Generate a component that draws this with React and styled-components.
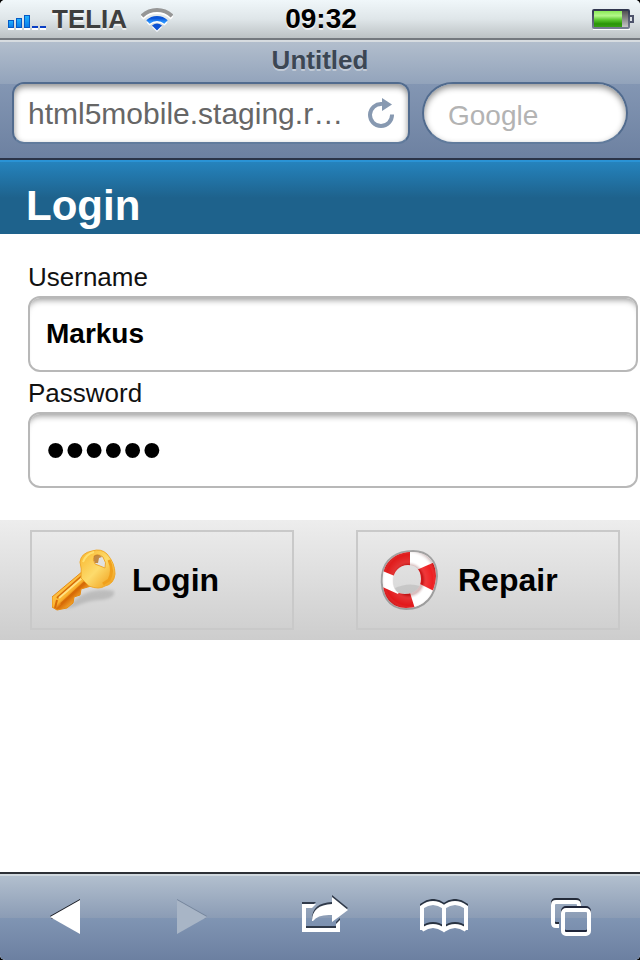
import React, { useState } from "react";
import styled, { createGlobalStyle } from "styled-components";

const GlobalStyle = createGlobalStyle`
  * {
    box-sizing: border-box;
  }

  body {
    margin: 0;
    background: #000;
    font-family: "Liberation Sans", Arial, Helvetica, sans-serif;
  }
`;

const Screen = styled.div`
  display: flex;
  flex-direction: column;
  min-height: 100vh;
  background: #fff;
  border-radius: 5px;
  overflow: hidden;
`;

const StatusBar = styled.div`
  display: grid;
  grid-template-columns: 1fr auto 1fr;
  align-items: center;
  height: 40px;
  padding: 0 6px 0 8px;
  border-bottom: 2px solid #74797e;
  background: linear-gradient(#f0f7fa, #dfe6e9 50%, #bcc2c4);
  font-weight: bold;
  line-height: 38px;
  text-shadow: 0 2px 0 rgba(255, 255, 255, 0.7);
`;

const Carrier = styled.div`
  display: flex;
  align-items: center;
  color: #3e3e3e;
  font-size: 26px;

  svg:first-child {
    margin: 6px 6px 0 0;
  }

  svg:last-child {
    margin-left: 14px;
  }
`;

const Clock = styled.time`
  color: #000;
  font-size: 28px;
`;

const Battery = styled.svg`
  justify-self: end;
`;

const BrowserBar = styled.header`
  height: 120px;
  padding: 4px 12px 0;
  border-top: 2px solid #d7dce0;
  border-bottom: 2px solid #2b3448;
  background: linear-gradient(
    #b2becd 0,
    #92a3bb 42px,
    #8396b3 42px,
    #6d81a1 100%
  );
`;

const PageTitle = styled.div`
  color: #3c4754;
  font-size: 26px;
  font-weight: bold;
  line-height: 28px;
  text-align: center;
  text-shadow: 0 2px 0 rgba(255, 255, 255, 0.4);
`;

const BarFields = styled.div`
  display: grid;
  grid-template-columns: 398fr 206fr;
  gap: 12px;
  margin-top: 8px;
`;

const FieldBox = styled.div`
  display: flex;
  align-items: center;
  min-width: 0;
  height: 62px;
  padding: ${(props) => (props.$round ? "6px 24px 0" : "2px 12px 0 14px")};
  border: 2px solid #516b8e;
  border-bottom-color: #617b9c;
  border-radius: ${(props) => (props.$round ? "31px" : "12px")};
  background: #fff;
  box-shadow: inset 0 3px 6px rgba(0, 0, 0, 0.45);
`;

const BarInput = styled.input`
  flex: 1;
  width: 100%;
  min-width: 0;
  padding: 0;
  border: 0;
  outline: 0;
  background: transparent;
  color: #666;
  font-family: inherit;
  font-size: ${(props) => props.$size};
  text-overflow: ellipsis;

  &::placeholder {
    color: #b3b3b3;
    opacity: 1;
  }
`;

const IconButton = styled.button`
  display: flex;
  align-items: center;
  justify-content: center;
  padding: 0;
  border: 0;
  background: none;
  cursor: pointer;
`;

const Page = styled.main`
  flex: 1;
`;

const PageHeader = styled.div`
  padding: 22px 26px 0;
  height: 74px;
  border-top: 2px solid #2a93d5;
  background: linear-gradient(#2583bd, #1e628c 50%, #1e628c);

  h1 {
    margin: 0;
    color: #fff;
    font-size: 42px;
    line-height: 44px;
  }
`;

const Fields = styled.div`
  display: flex;
  flex-direction: column;
  padding: 26px 2px 32px 28px;
`;

const Label = styled.label`
  padding-bottom: 2px;
  color: #111;
  font-size: 26px;
  line-height: 34px;

  input + & {
    margin-top: 4px;
  }
`;

const TextInput = styled.input`
  width: 100%;
  height: 76px;
  padding: 0 16px;
  border: 2px solid #b8b8b8;
  border-radius: 12px;
  outline: 0;
  background: #fff;
  box-shadow: inset 0 7px 6px -5px rgba(0, 0, 0, 0.4);
  color: #000;
  font-family: inherit;
  font-size: 28px;
  font-weight: bold;

  &[type="password"] {
    font-size: 55px;
    font-weight: normal;
  }
`;

const Actions = styled.div`
  display: grid;
  grid-template-columns: 1fr 1fr;
  gap: 62px;
  padding: 10px 20px 10px 30px;
  background: linear-gradient(#ededed, #cdcdcd);
`;

const ActionButton = styled.button`
  display: flex;
  align-items: center;
  gap: 16px;
  height: 100px;
  padding: 0 20px;
  border: 2px solid #c9c9c9;
  background: none;
  color: #000;
  font-family: inherit;
  font-size: 32px;
  font-weight: bold;
  cursor: pointer;
`;

const Toolbar = styled.nav`
  display: grid;
  grid-template-columns: repeat(5, 1fr);
  height: 88px;
  padding: 0 6px 0 2px;
  border-top: 2px solid #2d3036;
  background: linear-gradient(
    #d0d8de 0,
    #d0d8de 2px,
    #b2bfce 2px,
    #8b9cb5 44px,
    #8095b3 44px,
    #6c80a1 100%
  );
`;

const SignalIcon = () => (
  <svg width="38" height="16" viewBox="0 0 38 16" aria-hidden="true">
    <defs>
      <linearGradient id="signal" x1="0" y1="0" x2="0" y2="1">
        <stop offset="0" stopColor="#22b4ff" />
        <stop offset="1" stopColor="#087be8" />
      </linearGradient>
    </defs>
    <path d="M0 15h6M8 15h6M16 15h6M24 15h6M32 15h6" stroke="#fff" strokeWidth="2" />
    <g fill="url(#signal)" stroke="#0759c4">
      <rect x=".5" y="6.500" width="5" height="7" />
      <rect x="8.500" y="4.500" width="5" height="9" />
      <rect x="16.500" y="1.500" width="5" height="12" />
    </g>
    <path d="M24 13h6M32 13h6" stroke="#0a3fc4" strokeWidth="2" />
  </svg>
);

const WifiIcon = () => (
  <svg width="32" height="28" viewBox="0 0 32 28" aria-hidden="true">
    <defs>
      <linearGradient id="wave" x1="0" y1="0" x2="0" y2="1">
        <stop offset="0" stopColor="#0a55d8" />
        <stop offset="1" stopColor="#2b94ff" />
      </linearGradient>
    </defs>
    <g transform="translate(0 4)" fill="none" stroke="#fff" strokeWidth="4">
      <path d="M1 9A22 22 0 0 1 31 9" />
      <path d="M7 15A13 13 0 0 1 25 15" />
      <path d="M11 18Q16 14 21 18L16 23z" fill="#fff" stroke="none" />
    </g>
    <g transform="translate(0 2)" fill="none" strokeWidth="4">
      <path d="M1 9A22 22 0 0 1 31 9" stroke="#969696" />
      <path d="M7 15A13 13 0 0 1 25 15" stroke="url(#wave)" strokeWidth="5" />
      <path d="M11 18.500Q16 14.500 21 18.500L16 23.500z" fill="#0b50d2" />
    </g>
  </svg>
);

const BatteryIcon = () => (
  <Battery width="42" height="22" viewBox="0 0 42 22" aria-hidden="true">
    <defs>
      <linearGradient id="charge" x1="0" y1="0" x2="0" y2="1">
        <stop offset="0" stopColor="#8bea57" />
        <stop offset=".3" stopColor="#b4f78a" />
        <stop offset=".55" stopColor="#5cc92f" />
        <stop offset=".8" stopColor="#2a9408" />
        <stop offset="1" stopColor="#399f16" />
      </linearGradient>
      <linearGradient id="empty" x1="0" y1="0" x2="0" y2="1">
        <stop offset="0" stopColor="#4a4a4a" />
        <stop offset="1" stopColor="#ccc" />
      </linearGradient>
      <linearGradient id="shell" x1="0" y1="0" x2="0" y2="1">
        <stop offset="0" stopColor="#30364f" />
        <stop offset="1" stopColor="#767b90" />
      </linearGradient>
    </defs>
    <path d="M1 21h37" stroke="#fff" strokeWidth="2" />
    <rect x="1" y="2" width="36" height="18" rx="1" fill="url(#empty)" stroke="url(#shell)" strokeWidth="2" />
    <rect x="2" y="3" width="28" height="16" fill="url(#charge)" />
    <path d="M38 8h3v6h-3" fill="#dde2e6" stroke="#4d536b" strokeWidth="2" />
  </Battery>
);

const ReloadIcon = () => (
  <svg width="28" height="32" viewBox="0 0 28 32" aria-hidden="true">
    <path d="M14 6A11 11 0 1 0 24 16.500" fill="none" stroke="#8799b1" strokeWidth="4" />
    <path d="M14 0l10 6.500L14 13z" fill="#8799b1" />
  </svg>
);

const KeyIcon = () => (
  <svg width="64" height="64" viewBox="0 0 64 64" aria-hidden="true">
    <defs>
      <linearGradient id="gold" x1="0" y1="0" x2="1" y2="1">
        <stop offset="0" stopColor="#f9b52b" />
        <stop offset=".5" stopColor="#fddb6c" />
        <stop offset="1" stopColor="#ee960f" />
      </linearGradient>
      <linearGradient id="blade" x1="0" y1="0" x2="1" y2="1">
        <stop offset=".2" stopColor="#ffcf55" />
        <stop offset=".48" stopColor="#fbb32f" />
        <stop offset=".54" stopColor="#d86c08" />
        <stop offset=".7" stopColor="#fbb838" />
      </linearGradient>
      <filter id="soft">
        <feGaussianBlur stdDeviation="1.5" />
      </filter>
    </defs>
    <path d="M12 61L28 48Q44 39 62 43Q64 51 47 52Q34 53 22 59z" fill="#888" opacity=".35" filter="url(#soft)" />
    <path d="M31 23L0 49V59L5 62L15 60L21 55L22 49L28 47L29 41L39 38L43 30z" fill="url(#blade)" stroke="#e78b12" />
    <path d="M31 27L5 50M34 33L9 56M5 52L3 60" fill="none" stroke="#d66b08" strokeWidth="2" />
    <path d="M7 50L30 30" stroke="#ffe183" strokeWidth="2" />
    <path
      fillRule="evenodd"
      d="M28 14Q29 5 40 3Q49 0 55 6Q63 15 63 26Q62 36 53 38Q47 42 37 38L29 30Q30 20 28 14zM42 8Q40 12 43 16L53 20Q55 15 51 9Q46 5 42 8z"
      fill="url(#gold)"
      stroke="#f0a92c"
    />
    <path d="M42 8Q46 5 50 9L47 10L46 15L43 15Q41 12 42 8z" fill="#bb741b" opacity=".8" />
    <path d="M57 12Q62 23 57 32L51 36" fill="none" stroke="#f0a01c" strokeWidth="3" />
    <path d="M31 14Q34 6 42 4" fill="none" stroke="#ffe06f" strokeWidth="2" />
  </svg>
);

const LifebuoyIcon = () => (
  <svg width="64" height="64" viewBox="0 0 64 64" aria-hidden="true">
    <defs>
      <radialGradient id="ringShade" cx=".5" cy=".5" r=".5">
        <stop offset=".5" stopColor="#600" stopOpacity=".25" />
        <stop offset=".62" stopColor="#fff" stopOpacity=".1" />
        <stop offset=".85" stopColor="#fff" stopOpacity="0" />
        <stop offset="1" stopColor="#400" stopOpacity=".2" />
      </radialGradient>
      <clipPath id="ring">
        <path
          clipRule="evenodd"
          d="M5 27C7 12 19 4 34 4C49 4 58 13 58 28C57 47 46 60 28 60C12 60 3 47 5 27zM15 33C15 42 19 46 27 46C38 46 43 39 43 31C43 21 37 17 30 17C21 17 15 24 15 33z"
        />
      </clipPath>
    </defs>
    <path
      d="M4 27C6 11 19 3 35 3C50 3 59 13 59 28C58 48 47 61 28 61C11 61 2 47 4 27z"
      fill="none"
      stroke="#777"
      strokeWidth="2"
      opacity=".6"
    />
    <path d="M17 40Q30 34 42 38Q40 47 28 47Q19 47 17 40z" fill="#999" opacity=".3" />
    <g clipPath="url(#ring)">
      <rect width="64" height="64" fill="#fff" />
      <path d="M32 24V0H0V21L24 31z" fill="#e01b1b" />
      <path d="M34 24L64 11V47L56 43L38 34z" fill="#ee2022" />
      <path d="M28 32L38 64H0V37L20 46z" fill="#e2191b" />
      <rect x="3" y="2" width="56" height="60" fill="url(#ringShade)" />
    </g>
  </svg>
);

const BackIcon = () => (
  <svg width="30" height="36" viewBox="0 0 30 36" aria-hidden="true">
    <path d="M0 17L30 0v4L2 20z" fill="#15171f" />
    <path d="M0 18L30 1v34z" fill="#fff" />
  </svg>
);

const ForwardIcon = () => (
  <svg width="30" height="36" viewBox="0 0 30 36" aria-hidden="true">
    <path d="M30 17L0 0v4l28 16z" fill="#75859c" />
    <path d="M30 18L0 1v34z" fill="#a8b5c6" />
  </svg>
);

const ShareIcon = () => {
  const tray = "M14 11H28L24 15H18V35H48V31L52 27V39H14z";
  const arrow = "M44 4L60 17L44 29V22Q30 21 25 28H24Q24 12 44 11z";
  return (
    <svg width="60" height="48" viewBox="0 0 60 48" aria-hidden="true">
      <g transform="translate(0 -2)" fill="#303a4a">
        <path d={tray} />
        <path d={arrow} />
      </g>
      <path d={tray} fill="#fff" />
      <path d={arrow} fill="#fff" />
    </svg>
  );
};

const BookIcon = () => {
  const outline =
    "M2 31V8Q13 0 24 8Q35 0 46 8V31M24 8V31M2 31Q13 23 24 31Q35 23 46 31";
  return (
    <svg width="48" height="36" viewBox="0 0 48 36" aria-hidden="true">
      <path d={outline} transform="translate(0 -2)" fill="none" stroke="#283241" strokeWidth="4" />
      <path d={outline} fill="none" stroke="#fff" strokeWidth="4" />
    </svg>
  );
};

const TabsIcon = () => (
  <svg width="40" height="38" viewBox="0 0 40 38" aria-hidden="true">
    <g fill="none" strokeWidth="4">
      <path d="M8 26H5Q2 26 2 23V5Q2 2 5 2H25Q28 2 28 5V8" stroke="#242b39" />
      <path d="M8 28H5Q2 28 2 25V7Q2 4 5 4H25Q28 4 28 7V8" stroke="#fff" />
      <rect x="12" y="10" width="26" height="24" rx="3" stroke="#20263a" />
      <rect x="12" y="12" width="26" height="24" rx="3" stroke="#fff" />
    </g>
  </svg>
);

const App = () => {
  const [formData, setFormData] = useState({
    username: "Markus",
    password: "secret",
  });

  const handleChange = (e) => {
    const { name, value } = e.target;
    setFormData({ ...formData, [name]: value });
  };

  return (
    <Screen>
      <GlobalStyle />
      <StatusBar>
        <Carrier>
          <SignalIcon />
          TELIA
          <WifiIcon />
        </Carrier>
        <Clock>09:32</Clock>
        <BatteryIcon />
      </StatusBar>

      <BrowserBar>
        <PageTitle>Untitled</PageTitle>
        <BarFields>
          <FieldBox>
            <BarInput
              $size="30px"
              aria-label="Address"
              defaultValue="html5mobile.staging.r…"
            />
            <IconButton type="button" aria-label="Reload">
              <ReloadIcon />
            </IconButton>
          </FieldBox>
          <FieldBox $round>
            <BarInput $size="28px" aria-label="Search" placeholder="Google" />
          </FieldBox>
        </BarFields>
      </BrowserBar>

      <Page>
        <PageHeader>
          <h1>Login</h1>
        </PageHeader>
        <form onSubmit={(e) => e.preventDefault()}>
          <Fields>
            <Label htmlFor="username">Username</Label>
            <TextInput
              id="username"
              name="username"
              type="text"
              value={formData.username}
              onChange={handleChange}
            />
            <Label htmlFor="password">Password</Label>
            <TextInput
              id="password"
              name="password"
              type="password"
              value={formData.password}
              onChange={handleChange}
            />
          </Fields>
          <Actions>
            <ActionButton type="submit">
              <KeyIcon />
              Login
            </ActionButton>
            <ActionButton type="button">
              <LifebuoyIcon />
              Repair
            </ActionButton>
          </Actions>
        </form>
      </Page>

      <Toolbar>
        <IconButton type="button" aria-label="Back">
          <BackIcon />
        </IconButton>
        <IconButton type="button" aria-label="Forward" disabled>
          <ForwardIcon />
        </IconButton>
        <IconButton type="button" aria-label="Share">
          <ShareIcon />
        </IconButton>
        <IconButton type="button" aria-label="Bookmarks">
          <BookIcon />
        </IconButton>
        <IconButton type="button" aria-label="Tabs">
          <TabsIcon />
        </IconButton>
      </Toolbar>
    </Screen>
  );
};

export default App;
